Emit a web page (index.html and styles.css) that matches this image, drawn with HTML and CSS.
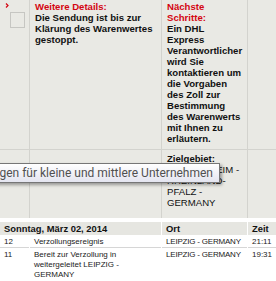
FILE: index.html
```html
<!DOCTYPE html>
<html>
    <head>
        <meta charset="utf-8">
        <title>Sendungsverfolgung</title>
        <link rel="stylesheet" href="styles.css">
    </head>
    <body>
        <div class="details">
            <div class="cell mark">
                <svg class="arrow" width="4" height="5" viewBox="0 0 4 5"><path d="M1 0.5 L3 2.5 L1 4.5" fill="none" stroke="#d40511" stroke-width="1.2"/></svg>
                <span class="box"></span>
            </div>
            <div class="cell">
                <p class="label">Weitere Details:</p>
                <p class="info">Die Sendung ist bis zur<br>Klärung des Warenwertes<br>gestoppt.</p>
            </div>
            <div class="cell">
                <p class="label">Nächste<br>Schritte:</p>
                <p class="info">Ein DHL<br>Express<br>Verantwortlicher<br>wird Sie<br>kontaktieren um<br>die Vorgaben<br>des Zoll zur<br>Bestimmung<br>des Warenwerts<br>mit Ihnen zu<br>erläutern.</p>
            </div>
            <div class="cell"></div>

            <div class="cell"></div>
            <div class="cell"></div>
            <div class="cell dest">
                <b>Zielgebiet:</b><br>WACHENHEIM -<br>RHEINLAND-<br>PFALZ -<br>GERMANY
            </div>
            <div class="cell"></div>
        </div>

        <div class="events">
            <div class="head wide">Sonntag, März 02, 2014</div>
            <div class="head">Ort</div>
            <div class="head">Zeit</div>

            <div class="row">12</div>
            <div class="row">Verzollungsereignis</div>
            <div class="row place">LEIPZIG - GERMANY</div>
            <div class="row">21:11</div>

            <div class="row last">11</div>
            <div class="row last">Bereit zur Verzollung in<br>weitergeleitet LEIPZIG -<br>GERMANY</div>
            <div class="row last place">LEIPZIG - GERMANY</div>
            <div class="row last">19:31</div>
        </div>

        <div class="tooltip">Lösungen für kleine und mittlere Unternehmen</div>
    </body>
</html>
```

FILE: styles.css
```css
body {
    margin: 0;
    width: 276px;
    height: 281px;
    overflow: hidden;
    position: relative;
    font-family: 'Liberation Sans', Arial, sans-serif;
    color: #111;
    background: #fff;
}

p {
    margin: 0;
}

.details {
    display: grid;
    grid-template-columns: 29px 131px 85px 1fr;
    grid-template-rows: 149px 68px;
    gap: 1px;
    background: #d3d3ce;
}

.cell {
    background: #e9e9e4;
    padding: 1px 0 0 5px;
    font-size: 9.6px;
    line-height: 11px;
    white-space: nowrap;
}

.mark {
    padding: 3px 0 0 5px;
}

.arrow {
    display: block;
}

.box {
    display: block;
    width: 13px;
    height: 14px;
    margin: 4px 0 0 5px;
    border: 1px solid #c6c6c2;
}

.label {
    color: #d40511;
    font-weight: bold;
}

.info {
    font-weight: bold;
}

.dest {
    padding-top: 3px;
}

.events {
    display: grid;
    grid-template-columns: 29px 131px 85px 1fr;
    column-gap: 1px;
    margin-top: 4px;
    font-size: 8px;
    line-height: 10px;
    color: #222;
}

.head {
    background: #e6e6e1;
    font-weight: bold;
    font-size: 9.4px;
    line-height: 13px;
    padding: 0 4px;
    color: #111;
}

.wide {
    grid-column: span 2;
}

.row {
    padding: 2px 0 0 4px;
    border-bottom: 1px solid #d6d6d6;
    white-space: nowrap;
}

.row:first-of-type {
    padding-left: 3px;
}

.place {
    letter-spacing: -0.2px;
}

.last {
    border-bottom: none;
}

.tooltip {
    position: absolute;
    top: 163px;
    right: 56px;
    white-space: nowrap;
    font-family: Roboto, sans-serif;
    font-size: 12px;
    line-height: 18px;
    padding: 0 6px;
    color: #505050;
    border: 1px solid #767676;
    background: linear-gradient(#ffffff, #e4e5f0);
    box-shadow: 2px 2px 3px rgba(0, 0, 0, 0.35);
}
```
